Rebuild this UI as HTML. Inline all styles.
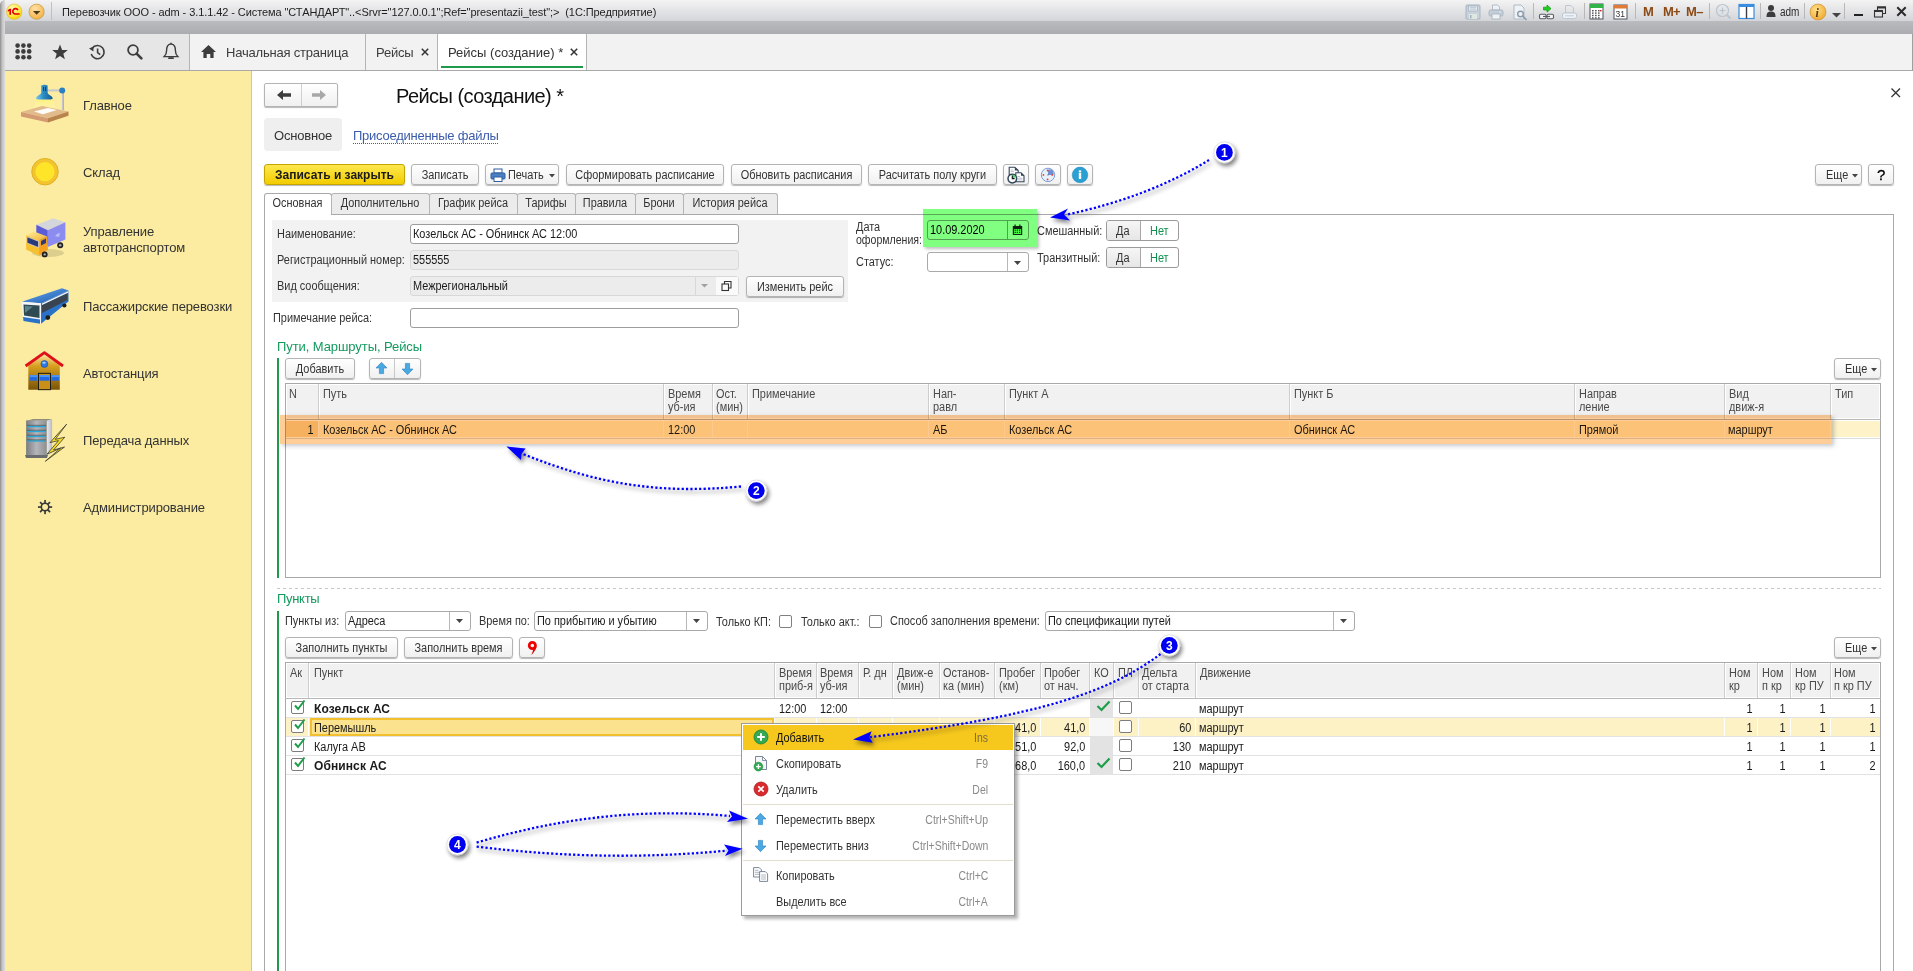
<!DOCTYPE html><html><head><meta charset="utf-8"><style>
*{margin:0;padding:0;box-sizing:border-box}
html,body{width:1913px;height:971px;overflow:hidden;background:#fff;font-family:"Liberation Sans",sans-serif}
.a{position:absolute}
.t{position:absolute;white-space:nowrap;line-height:16px;height:16px;font-family:"Liberation Sans",sans-serif}
.btn{position:absolute;border:1px solid #b4b4b4;border-radius:3px;background:linear-gradient(#ffffff,#f0f0f0);box-shadow:0 1px 1px rgba(0,0,0,.28)}
.inp{position:absolute;border:1px solid #a9a9a9;border-radius:3px;background:#fff}
</style></head><body><div class="a" style="left:0px;top:0px;width:1913px;height:21px;background:linear-gradient(#f3f3f3,#d3d5d9)"></div>
<div class="a" style="left:0px;top:21px;width:1913px;height:13px;background:linear-gradient(#b9bbbf,#aaacb0)"></div>
<div class="a" style="left:0px;top:0px;width:5px;height:971px;background:linear-gradient(90deg,#8e8e8e,#c4c4c4 45%,#dcdcdc);border-top-left-radius:6px"></div>
<svg class="a" style="left:5px;top:2px;" width="20" height="20" viewBox="0 0 20 20"><defs><radialGradient id="g1c" cx="40%" cy="30%" r="75%"><stop offset="0" stop-color="#fffac0"/><stop offset=".6" stop-color="#ffe640"/><stop offset="1" stop-color="#f5d000"/></radialGradient></defs><circle cx="9.2" cy="9.7" r="7.7" fill="url(#g1c)" stroke="#d8b020" stroke-width="0.5"/><path d="M2.8 8.1 L4.7 6.8 H6.1 V12.8 H4.4 V8.9 L2.8 9.7Z" fill="#e00000"/><path d="M12.9 8.2 A2.7 2.7 0 1 0 9.9 12 H14.6" fill="none" stroke="#e00000" stroke-width="1.7"/></svg>
<svg class="a" style="left:28px;top:3px;" width="18" height="18" viewBox="0 0 18 18"><defs><radialGradient id="gdd" cx="40%" cy="30%" r="75%"><stop offset="0" stop-color="#ffe0a8"/><stop offset="1" stop-color="#f5b040"/></radialGradient></defs><circle cx="8.6" cy="8.7" r="7.6" fill="url(#gdd)" stroke="#b89030" stroke-width="0.6"/><path d="M4.9 8 L12.4 8 L8.6 11.8Z" fill="#4a3a1a"/></svg>
<div class="a" style="left:51px;top:2px;width:1px;height:18px;background:#c0c0c0"></div>
<div class="t" style="left:62px;top:4px;font-size:11px;letter-spacing:-0.08px;color:#1e1e1e;font-weight:normal;">Перевозчик ООО - adm - 3.1.1.42 - Система "СТАНДАРТ"..&lt;Srvr="127.0.0.1";Ref="presentazii_test";&gt;&nbsp;&nbsp;(1С:Предприятие)</div>
<svg class="a" style="left:1465px;top:4px;" width="16" height="16" viewBox="0 0 16 16"><rect x="1" y="1" width="14" height="14" rx="1" fill="#c8d2dc" stroke="#a4b0bc" stroke-width="0.9"/><rect x="3.5" y="2" width="9" height="5" fill="#e4eaf0" stroke="#a4b0bc" stroke-width="0.7"/><path d="M5 3.6 H11 M5 5.2 H11" stroke="#a4b0bc" stroke-width="0.6"/><rect x="4" y="10" width="8" height="5" fill="#dfe8e0"/><rect x="5" y="11" width="1.5" height="3.5" fill="#a4b0bc"/></svg>
<svg class="a" style="left:1488px;top:4px;" width="16" height="16" viewBox="0 0 16 16"><path d="M4.5 1 H9.5 L11.5 3 V6 H4.5Z" fill="#eef2f5" stroke="#a4b0bc" stroke-width="0.8"/><rect x="1" y="6" width="14" height="6" rx="1.5" fill="#c3ced9" stroke="#a4b0bc" stroke-width="0.8"/><rect x="4" y="10" width="8" height="5" fill="#eef2f5" stroke="#a4b0bc" stroke-width="0.8"/><circle cx="12" cy="8" r="0.7" fill="#eef2f5"/></svg>
<svg class="a" style="left:1512px;top:4px;" width="17" height="17" viewBox="0 0 17 17"><path d="M2 1 H9 L12 4 V15 H2Z" fill="#eef2f5" stroke="#a9b6c3" stroke-width="0.9"/><circle cx="8.5" cy="10" r="2.8" fill="none" stroke="#8a9aaa" stroke-width="1.4"/><path d="M10.5 12 L14.5 16" stroke="#8a9aaa" stroke-width="1.7"/></svg>
<div class="a" style="left:1533px;top:3px;width:1px;height:16px;background:#b8b8b8"></div>
<svg class="a" style="left:1538px;top:3px;" width="17" height="17" viewBox="0 0 17 17"><path d="M5.5 4.2 H9 V2 L13 5.6 L9 9.2 V7 H5.5Z" fill="#20d020" stroke="#109010" stroke-width="0.7"/><rect x="1.5" y="11.2" width="6.5" height="4.6" rx="1.2" fill="#f4f4f4" stroke="#5a5e66" stroke-width="1.1"/><rect x="9" y="11.2" width="6.5" height="4.6" rx="1.2" fill="#f4f4f4" stroke="#5a5e66" stroke-width="1.1"/><path d="M5 13.5 H12" stroke="#5a5e66" stroke-width="1.1"/></svg>
<svg class="a" style="left:1561px;top:4px;" width="17" height="16" viewBox="0 0 17 16"><path d="M4.5 1.5 H10 L12.5 4 V9 H4.5Z" fill="none" stroke="#b9c4cf" stroke-width="0.9"/><rect x="1.5" y="9" width="14" height="5.5" rx="2" fill="#eef2f6" stroke="#b9c4cf" stroke-width="0.9"/><path d="M4 11.8 H13" stroke="#b9c4cf" stroke-width="0.8"/></svg>
<div class="a" style="left:1584px;top:3px;width:1px;height:16px;background:#b8b8b8"></div>
<svg class="a" style="left:1589px;top:3px;" width="15" height="17" viewBox="0 0 15 17"><rect x="1" y="1" width="13" height="15" fill="#fff" stroke="#4c5460"/><rect x="1" y="1" width="13" height="4" fill="#31b34a"/><rect x="3" y="7.0" width="1.6" height="1.4" fill="#555"/><rect x="3" y="9.4" width="1.6" height="1.4" fill="#555"/><rect x="3" y="11.8" width="1.6" height="1.4" fill="#555"/><rect x="3" y="14.2" width="1.6" height="1.4" fill="#555"/><rect x="6" y="7.0" width="1.6" height="1.4" fill="#555"/><rect x="6" y="9.4" width="1.6" height="1.4" fill="#555"/><rect x="6" y="11.8" width="1.6" height="1.4" fill="#555"/><rect x="6" y="14.2" width="1.6" height="1.4" fill="#555"/><rect x="9" y="7.0" width="1.6" height="1.4" fill="#555"/><rect x="9" y="9.4" width="1.6" height="1.4" fill="#555"/><rect x="9" y="11.8" width="1.6" height="1.4" fill="#555"/><rect x="9" y="14.2" width="1.6" height="1.4" fill="#555"/><rect x="11" y="7" width="1.6" height="1.4" fill="#d22"/></svg>
<svg class="a" style="left:1613px;top:3px;" width="15" height="17" viewBox="0 0 15 17"><rect x="1" y="2" width="13" height="14" fill="#fff" stroke="#4c5460"/><rect x="1" y="2" width="13" height="3.5" fill="#e07c3a"/><text x="2.5" y="14" font-family="Liberation Sans" font-size="8.5" fill="#333">31</text></svg>
<div class="a" style="left:1635px;top:3px;width:1px;height:16px;background:#b8b8b8"></div>
<div class="t" style="left:1643px;top:4px;font-size:13px;letter-spacing:0px;color:#8b4a16;font-weight:bold;">M</div>
<div class="t" style="left:1663px;top:4px;font-size:13px;letter-spacing:-0.8px;color:#8b4a16;font-weight:bold;">M+</div>
<div class="t" style="left:1686px;top:4px;font-size:13px;letter-spacing:-0.5px;color:#8b4a16;font-weight:bold;">M–</div>
<div class="a" style="left:1709px;top:3px;width:1px;height:16px;background:#b8b8b8"></div>
<svg class="a" style="left:1715px;top:3px;" width="17" height="17" viewBox="0 0 17 17"><circle cx="7.5" cy="7.5" r="6" fill="none" stroke="#b9c4cf" stroke-width="1.2"/><path d="M7.5 4.5V10.5M4.5 7.5H10.5" stroke="#b9c4cf" stroke-width="1.2"/><path d="M12 12 L15.5 15.5" stroke="#b9c4cf" stroke-width="2"/></svg>
<svg class="a" style="left:1738px;top:3px;" width="17" height="17" viewBox="0 0 17 17"><rect x="1" y="1.5" width="15" height="14" fill="#fff" stroke="#3a8ee0" stroke-width="1.2"/><rect x="1" y="1.5" width="15" height="2.5" fill="#3a8ee0"/><path d="M8.5 4V15.5" stroke="#3a3f48" stroke-width="1.4"/></svg>
<div class="a" style="left:1760px;top:3px;width:1px;height:16px;background:#b8b8b8"></div>
<svg class="a" style="left:1766px;top:4px;" width="10" height="14" viewBox="0 0 10 14"><circle cx="5" cy="4" r="3" fill="#3c3c3c"/><path d="M0.5 13 C0.5 8 2.5 7.5 5 7.5 C7.5 7.5 9.5 8 9.5 13Z" fill="#3c3c3c"/></svg>
<div class="t" style="left:1780px;top:4px;font-size:12px;letter-spacing:0px;color:#2a2a2a;font-weight:normal;transform:scaleX(0.83);transform-origin:0 0;">adm</div>
<div class="a" style="left:1804px;top:3px;width:1px;height:16px;background:#b8b8b8"></div>
<svg class="a" style="left:1809px;top:3px;" width="18" height="18" viewBox="0 0 18 18"><defs><radialGradient id="gin" cx="40%" cy="35%" r="70%"><stop offset="0" stop-color="#ffe08a"/><stop offset="1" stop-color="#f0a830"/></radialGradient></defs><circle cx="9" cy="9" r="8" fill="url(#gin)" stroke="#c98a2a" stroke-width="0.6"/><text x="6.6" y="14" font-family="Liberation Serif" font-style="italic" font-weight="bold" font-size="12" fill="#5a3a10">i</text></svg>
<svg class="a" style="left:1831px;top:11px;" width="12" height="8" viewBox="0 0 12 8"><path d="M1 2 H10 L5.5 6.5Z" fill="#444"/></svg>
<div class="a" style="left:1844px;top:3px;width:1px;height:16px;background:#b8b8b8"></div>
<div class="a" style="left:1854px;top:14px;width:9px;height:2px;background:#222"></div>
<svg class="a" style="left:1873px;top:6px;" width="14" height="12" viewBox="0 0 14 12"><path d="M4.5 4 V1 H12.5 V7.5 H10" fill="none" stroke="#333" stroke-width="1.1"/><rect x="4" y="0.5" width="9" height="2" fill="#333"/><rect x="1.5" y="4.5" width="8" height="6.5" fill="none" stroke="#333" stroke-width="1.1"/><rect x="1" y="4" width="9" height="2" fill="#333"/></svg>
<svg class="a" style="left:1896px;top:6px;" width="11" height="11" viewBox="0 0 11 11"><path d="M1.3 1.3 L9.7 9.7 M9.7 1.3 L1.3 9.7" stroke="#2a2a2a" stroke-width="2"/></svg>
<div class="a" style="left:5px;top:34px;width:185px;height:36px;background:#e6e6e6"></div>
<div class="a" style="left:189px;top:34px;width:1px;height:36px;background:#b4b4b4"></div>
<div class="a" style="left:190px;top:34px;width:1723px;height:36px;background:#f2f2f2"></div>
<div class="a" style="left:5px;top:70px;width:1908px;height:1px;background:#a9a9a9"></div>
<svg class="a" style="left:15px;top:43px;" width="18" height="18" viewBox="0 0 18 18"><circle cx="2.6" cy="2.6" r="2.3" fill="#3d3d3d"/><circle cx="2.6" cy="8.4" r="2.3" fill="#3d3d3d"/><circle cx="2.6" cy="14.2" r="2.3" fill="#3d3d3d"/><circle cx="8.4" cy="2.6" r="2.3" fill="#3d3d3d"/><circle cx="8.4" cy="8.4" r="2.3" fill="#3d3d3d"/><circle cx="8.4" cy="14.2" r="2.3" fill="#3d3d3d"/><circle cx="14.2" cy="2.6" r="2.3" fill="#3d3d3d"/><circle cx="14.2" cy="8.4" r="2.3" fill="#3d3d3d"/><circle cx="14.2" cy="14.2" r="2.3" fill="#3d3d3d"/></svg>
<svg class="a" style="left:51px;top:43px;" width="18" height="18" viewBox="0 0 18 18"><path d="M9 1.5 L11.1 6.9 L16.8 7.1 L12.3 10.7 L13.9 16.2 L9 13.1 L4.1 16.2 L5.7 10.7 L1.2 7.1 L6.9 6.9Z" fill="#3d3d3d"/></svg>
<svg class="a" style="left:88px;top:43px;" width="18" height="18" viewBox="0 0 18 18"><path d="M4.2 5.2 A6.6 6.6 0 1 1 3.2 11" fill="none" stroke="#3d3d3d" stroke-width="1.6"/><path d="M1 5.5 L5.6 3.6 L5.4 8.4Z" fill="#3d3d3d"/><path d="M9.6 5.5 V9.6 L12.2 11.6" fill="none" stroke="#3d3d3d" stroke-width="1.6"/></svg>
<svg class="a" style="left:126px;top:43px;" width="18" height="18" viewBox="0 0 18 18"><circle cx="7" cy="7" r="4.9" fill="none" stroke="#3d3d3d" stroke-width="1.8"/><path d="M10.6 10.6 L15.4 15.4" stroke="#3d3d3d" stroke-width="2.6" stroke-linecap="round"/></svg>
<svg class="a" style="left:162px;top:42px;" width="18" height="19" viewBox="0 0 18 19"><path d="M9 2 C5.4 2 4.6 5.5 4.6 8.5 C4.6 11.5 3.8 13 2.2 14.6 H15.8 C14.2 13 13.4 11.5 13.4 8.5 C13.4 5.5 12.6 2 9 2Z" fill="none" stroke="#3d3d3d" stroke-width="1.4"/><path d="M7 16.2 H11" stroke="#3d3d3d" stroke-width="1.8" stroke-linecap="round"/><path d="M9 0.8 V2.2" stroke="#3d3d3d" stroke-width="1.4"/></svg>
<svg class="a" style="left:200px;top:44px;" width="17" height="15" viewBox="0 0 17 15"><path d="M8.5 1 L16 8 H13.6 V14 H10.3 V10 H6.7 V14 H3.4 V8 H1Z" fill="#3d3d3d"/></svg>
<div class="t" style="left:226px;top:45px;font-size:13px;letter-spacing:-0.2px;color:#3c3c3c;font-weight:normal;">Начальная страница</div>
<div class="a" style="left:365px;top:34px;width:1px;height:36px;background:#b4b4b4"></div>
<div class="t" style="left:376px;top:45px;font-size:13px;letter-spacing:-0.2px;color:#3c3c3c;font-weight:normal;">Рейсы</div>
<svg class="a" style="left:420px;top:47px;" width="10" height="10" viewBox="0 0 10 10"><path d="M1.8 1.8 L8.2 8.2 M8.2 1.8 L1.8 8.2" stroke="#333" stroke-width="1.5"/></svg>
<div class="a" style="left:437px;top:34px;width:1px;height:36px;background:#b4b4b4"></div>
<div class="a" style="left:438px;top:34px;width:148px;height:36px;background:#ffffff"></div>
<div class="t" style="left:448px;top:45px;font-size:13px;letter-spacing:0px;color:#333;font-weight:normal;">Рейсы (создание) *</div>
<svg class="a" style="left:569px;top:47px;" width="10" height="10" viewBox="0 0 10 10"><path d="M1.8 1.8 L8.2 8.2 M8.2 1.8 L1.8 8.2" stroke="#333" stroke-width="1.5"/></svg>
<div class="a" style="left:441px;top:66px;width:142px;height:2px;background:#1f9a4a"></div>
<div class="a" style="left:586px;top:34px;width:1px;height:36px;background:#b4b4b4"></div>
<div class="a" style="left:1912px;top:34px;width:1px;height:37px;background:#a0a0a0"></div>
<div class="a" style="left:5px;top:71px;width:246px;height:900px;background:#fbeca1"></div>
<div class="a" style="left:251px;top:71px;width:1px;height:900px;background:#d6c78a"></div>
<svg class="a" style="left:15px;top:75px;" width="60" height="60" viewBox="0 0 60 60"><defs><linearGradient id="lp1" x1="0" y1="0" x2="1" y2="0"><stop offset="0" stop-color="#7cc8ee"/><stop offset=".45" stop-color="#2a8cc4"/><stop offset="1" stop-color="#125c94"/></linearGradient><linearGradient id="pole" x1="0" y1="0" x2="1" y2="0"><stop offset="0" stop-color="#f4f4f8"/><stop offset="1" stop-color="#9a9ca8"/></linearGradient><linearGradient id="lgt" x1="0" y1="0" x2="0" y2="1"><stop offset="0" stop-color="#fff27a" stop-opacity=".95"/><stop offset="1" stop-color="#fff6b0" stop-opacity=".5"/></linearGradient></defs><path d="M22 24.4 H37 L41 33 H18Z" fill="url(#lgt)"/><path d="M6 37 L27 31 L53.5 36.5 L33 43.3Z" fill="#e2bb8c"/><path d="M6 37 L33 43.3 V47.6 L6 41.5Z" fill="#d49a72"/><path d="M33 43.3 L53.5 36.5 V40.8 L33 47.6Z" fill="#b9834e"/><path d="M19 36.6 L33 33 L42 35 L28 39.2Z" fill="#fff" opacity=".95"/><rect x="46" y="16" width="2.8" height="19" fill="url(#pole)"/><rect x="32" y="14.4" width="14" height="2" fill="#c4c6d0"/><circle cx="47.2" cy="15.6" r="3" fill="#2a7fc0"/><path d="M26.2 10.4 Q29.4 9.2 32.6 10.4 V17.8 C33 20 37.7 21 37.7 23.4 Q37.7 24.6 29.4 24.6 Q21 24.6 21 23.4 C21 21 25.8 20 26.2 17.8Z" fill="url(#lp1)"/><rect x="28" y="12" width="0.9" height="4" fill="#0c3a60"/><rect x="30" y="12" width="0.9" height="4" fill="#0c3a60"/></svg>
<div class="t" style="left:83px;top:98px;font-size:13px;letter-spacing:-0.12px;color:#333;font-weight:normal;">Главное</div>
<svg class="a" style="left:30px;top:157px;" width="30" height="30" viewBox="0 0 30 30"><circle cx="15" cy="14.7" r="13.3" fill="#f4c430" stroke="#d8a818" stroke-width="0.8"/><circle cx="15" cy="14.7" r="9.6" fill="#ffe52a"/></svg>
<div class="t" style="left:83px;top:165px;font-size:13px;letter-spacing:-0.12px;color:#333;font-weight:normal;">Склад</div>
<svg class="a" style="left:15px;top:205px;" width="60" height="60" viewBox="0 0 60 60"><defs><linearGradient id="cab" x1="0" y1="0" x2="1" y2="1"><stop offset="0" stop-color="#fff0a0"/><stop offset="1" stop-color="#f2b030"/></linearGradient></defs><ellipse cx="33" cy="48" rx="16" ry="4" fill="#000" opacity=".12"/><path d="M21.3 19.8 L38.3 13.3 L50.4 17.3 L32.8 25.3Z" fill="#d4d6dc"/><path d="M21.3 19.8 L32.8 25.3 V40.5 L21.3 33Z" fill="#5c5cd6"/><path d="M32.8 25.3 L50.4 17.3 V34.6 L32.8 42Z" fill="#8c8cf0"/><path d="M40 31 Q42 28 45 28 L44 32Z" fill="#c8c8fa" opacity=".8"/><circle cx="45.2" cy="40.2" r="3" fill="#1e1e1e"/><circle cx="45.2" cy="40.2" r="1.3" fill="#aaa"/><path d="M11.1 30.3 L18.5 26.3 L32.1 31.5 L24.1 35.5Z" fill="url(#cab)"/><path d="M24.1 35.5 L32.1 31.5 L33 44.5 L24.1 50.7Z" fill="#f4a020"/><path d="M11.1 30.3 L24.1 35.5 V50.7 L11.1 44.5Z" fill="#f6c030"/><path d="M12 31.8 L23.5 36.3 V42.5 L12 38Z" fill="#2a3a7a" stroke="#e8e8f0" stroke-width="0.6"/><path d="M26 36 L31 33.5 V38 L26 40.5Z" fill="#2a3a7a"/><circle cx="29.7" cy="49.4" r="2.9" fill="#1e1e1e"/><circle cx="29.7" cy="49.4" r="1.2" fill="#aaa"/></svg>
<div class="t" style="left:83px;top:224px;font-size:13px;letter-spacing:-0.12px;color:#333;font-weight:normal;">Управление</div>
<div class="t" style="left:83px;top:240px;font-size:13px;letter-spacing:-0.12px;color:#333;font-weight:normal;">автотранспортом</div>
<svg class="a" style="left:15px;top:278px;" width="60" height="60" viewBox="0 0 60 60"><defs><linearGradient id="bus" x1="0" y1="0" x2="1" y2="1"><stop offset="0" stop-color="#6aaaf0"/><stop offset="1" stop-color="#1a5ab0"/></linearGradient></defs><path d="M6.8 23.8 L47 10.2 L53.5 12.4 L26 25.3Z" fill="url(#bus)"/><path d="M26 25.3 L53.5 12.4 V23.5 L26 45.7Z" fill="#2a72c8"/><path d="M27 27 L52.5 15 V22 L27 35Z" fill="#3a4450"/><path d="M27 25.5 L53.5 13 V14.5 L27 27Z" fill="#f0f4fa"/><path d="M6.8 23.8 L26 25.3 V45.7 L8 42Z" fill="#f4f6fa"/><path d="M8.5 26.5 L24.5 27.5 V40 L9 37.5Z" fill="#2e4a52"/><path d="M10 28 L18 28.5 L10 35Z" fill="#7aa8b0" opacity=".6"/><path d="M8 39 L25 41.5 V45.7 L8.5 43Z" fill="#2a72c8"/><circle cx="32.8" cy="39.6" r="2.4" fill="#1e1e1e"/><circle cx="49.4" cy="27.5" r="2.1" fill="#1e1e1e"/></svg>
<div class="t" style="left:83px;top:299px;font-size:13px;letter-spacing:-0.12px;color:#333;font-weight:normal;">Пассажирские перевозки</div>
<svg class="a" style="left:15px;top:343px;" width="60" height="60" viewBox="0 0 60 60"><defs><linearGradient id="hs" x1="0" y1="0" x2="0" y2="1"><stop offset="0" stop-color="#fff0b0"/><stop offset=".35" stop-color="#d8a020"/><stop offset="1" stop-color="#7a5408"/></linearGradient></defs><path d="M13.3 22 L29.4 10 L44.8 22 V46.7 H13.3Z" fill="url(#hs)"/><path d="M10.6 23 L29.4 9.6 L48 23" fill="none" stroke="#e0101a" stroke-width="2.8" stroke-linejoin="round"/><circle cx="29.4" cy="21" r="3.5" fill="#2f78e0" stroke="#1a4090" stroke-width="0.5"/><ellipse cx="29" cy="19.8" rx="1.8" ry="1" fill="#a8d0ff"/><rect x="14.8" y="32.1" width="7.1" height="5.6" fill="#1f6ae0"/><rect x="37" y="32.1" width="6.9" height="5.6" fill="#1f6ae0"/><rect x="23.5" y="30.3" width="12" height="16.4" fill="#c89018" stroke="#111" stroke-width="0.9"/><rect x="24.5" y="32" width="10" height="5.7" fill="#1f6ae0"/><rect x="14.8" y="32.1" width="7.1" height="2" fill="#60a8ff" opacity=".7"/><rect x="24.5" y="32" width="10" height="2" fill="#60a8ff" opacity=".7"/><rect x="37" y="32.1" width="6.9" height="2" fill="#60a8ff" opacity=".7"/></svg>
<div class="t" style="left:83px;top:366px;font-size:13px;letter-spacing:-0.12px;color:#333;font-weight:normal;">Автостанция</div>
<svg class="a" style="left:15px;top:410px;" width="60" height="60" viewBox="0 0 60 60"><defs><linearGradient id="sv" x1="0" y1="0" x2="1" y2="0"><stop offset="0" stop-color="#7a7c80"/><stop offset=".5" stop-color="#b4b6ba"/><stop offset="1" stop-color="#8c8e92"/></linearGradient><linearGradient id="sv2" x1="0" y1="0" x2="1" y2="0"><stop offset="0" stop-color="#e8eaee"/><stop offset="1" stop-color="#b8bac0"/></linearGradient></defs><path d="M31.8 10.5 L37.1 9.3 V42 L31.8 46Z" fill="url(#sv2)"/><path d="M11.1 10.8 L18 9.3 H37.1 L31.8 10.5Z" fill="#6a6c70"/><rect x="11.1" y="10.5" width="20.7" height="35.5" fill="url(#sv)"/><rect x="12" y="15.8" width="19" height="1.4" fill="#28a8d8"/><rect x="12" y="20.7" width="19" height="1.4" fill="#28a8d8"/><rect x="12" y="25.7" width="19" height="1.4" fill="#28a8d8"/><rect x="12" y="30.3" width="19" height="1.4" fill="#28a8d8"/><rect x="12" y="14.8" width="19" height="1" fill="#333" opacity=".5"/><rect x="12" y="19.7" width="19" height="1" fill="#333" opacity=".5"/><rect x="12" y="24.7" width="19" height="1" fill="#333" opacity=".5"/><rect x="12" y="29.3" width="19" height="1" fill="#333" opacity=".5"/><path d="M10 45 H33 L32 48 H11Z" fill="#6a6c70"/><path d="M51.6 14.2 L35 32.6 L43.5 30.6 L32 44.2 L45.5 38.2 L30.3 51.3 L49.5 37 L38.5 40 L49.8 27.2 L40.2 29.4Z" fill="#f8dc20" stroke="#3a3a3a" stroke-width="0.8" stroke-linejoin="round"/></svg>
<div class="t" style="left:83px;top:433px;font-size:13px;letter-spacing:-0.12px;color:#333;font-weight:normal;">Передача данных</div>
<svg class="a" style="left:37px;top:499px;" width="16" height="16" viewBox="0 0 16 16"><g transform="translate(8.05 8.05)"><rect x="-0.85" y="-7.1" width="1.7" height="3.4" fill="#3a3a3a" transform="rotate(0)"/><rect x="-0.85" y="-7.1" width="1.7" height="3.4" fill="#3a3a3a" transform="rotate(45)"/><rect x="-0.85" y="-7.1" width="1.7" height="3.4" fill="#3a3a3a" transform="rotate(90)"/><rect x="-0.85" y="-7.1" width="1.7" height="3.4" fill="#3a3a3a" transform="rotate(135)"/><rect x="-0.85" y="-7.1" width="1.7" height="3.4" fill="#3a3a3a" transform="rotate(180)"/><rect x="-0.85" y="-7.1" width="1.7" height="3.4" fill="#3a3a3a" transform="rotate(225)"/><rect x="-0.85" y="-7.1" width="1.7" height="3.4" fill="#3a3a3a" transform="rotate(270)"/><rect x="-0.85" y="-7.1" width="1.7" height="3.4" fill="#3a3a3a" transform="rotate(315)"/><circle r="3.75" fill="none" stroke="#3a3a3a" stroke-width="1.6"/></g></svg>
<div class="t" style="left:83px;top:500px;font-size:13px;letter-spacing:-0.12px;color:#333;font-weight:normal;">Администрирование</div>
<div class="btn" style="left:264px;top:83px;width:74px;height:24px;border-radius:2px"></div>
<div class="a" style="left:301px;top:84px;width:1px;height:22px;background:#d0d0d0"></div>
<svg class="a" style="left:276px;top:89px;" width="16" height="12" viewBox="0 0 16 12"><path d="M1 6 L7 1 V4.3 H15 V7.7 H7 V11Z" fill="#3d3d3d"/></svg>
<svg class="a" style="left:311px;top:89px;" width="16" height="12" viewBox="0 0 16 12"><path d="M15 6 L9 1 V4.3 H1 V7.7 H9 V11Z" fill="#a8a8a8"/></svg>
<div class="t" style="left:396px;top:88px;font-size:20px;letter-spacing:-0.55px;color:#111;font-weight:normal;line-height:16px">Рейсы (создание) *</div>
<svg class="a" style="left:1890px;top:87px;" width="12" height="12" viewBox="0 0 12 12"><path d="M1.5 1.5 L10 10 M10 1.5 L1.5 10" stroke="#333" stroke-width="1.3"/></svg>
<div class="a" style="left:264px;top:118px;width:78px;height:33px;background:#efefef;border-radius:4px"></div>
<div class="t" style="left:274px;top:128px;font-size:13px;letter-spacing:-0.2px;color:#333;font-weight:normal;">Основное</div>
<div class="t" style="left:353px;top:128px;font-size:13px;letter-spacing:-0.25px;color:#3b5ba9;font-weight:normal;">Присоединенные файлы</div>
<div class="a" style="left:353px;top:143px;width:146px;height:1px;background-image:linear-gradient(90deg,#3b5ba9 50%,transparent 50%);background-size:2px 1px"></div>
<div class="btn" style="left:264px;top:164px;width:141px;height:21px;border-color:#c4a500;background:linear-gradient(#fde84e,#f3cc00)"></div>
<div class="t" style="left:275px;top:166.5px;font-size:12px;letter-spacing:0px;color:#1a1a1a;font-weight:bold;">Записать и закрыть</div>
<div class="btn" style="left:411px;top:164px;width:68px;height:21px;"></div>
<div class="t" style="left:411px;width:68px;text-align:center;top:166.5px;font-size:12px;color:#333;transform:scaleX(0.91);transform-origin:50% 0">Записать</div>
<div class="btn" style="left:485px;top:164px;width:74px;height:21px;"></div>
<svg class="a" style="left:490px;top:168px;" width="16" height="14" viewBox="0 0 16 14"><rect x="4" y="1" width="8" height="4" fill="#fff" stroke="#2f5f9e" stroke-width="1"/><rect x="1" y="5" width="14" height="6" rx="1" fill="#4a7fc4" stroke="#2f5f9e"/><rect x="4" y="9" width="8" height="4.5" fill="#fff" stroke="#2f5f9e"/></svg>
<div class="t" style="left:508px;top:166.5px;font-size:12px;letter-spacing:0px;color:#333;font-weight:normal;transform:scaleX(0.91);transform-origin:0 0;">Печать</div>
<svg class="a" style="left:549px;top:174px;" width="6" height="4" viewBox="0 0 6 4"><path d="M0 0 H6 L3 3.5Z" fill="#444"/></svg>
<div class="btn" style="left:566px;top:164px;width:158px;height:21px;"></div>
<div class="t" style="left:566px;width:158px;text-align:center;top:166.5px;font-size:12px;color:#333;transform:scaleX(0.91);transform-origin:50% 0">Сформировать расписание</div>
<div class="btn" style="left:731px;top:164px;width:131px;height:21px;"></div>
<div class="t" style="left:731px;width:131px;text-align:center;top:166.5px;font-size:12px;color:#333;transform:scaleX(0.91);transform-origin:50% 0">Обновить расписания</div>
<div class="btn" style="left:868px;top:164px;width:129px;height:21px;"></div>
<div class="t" style="left:868px;width:129px;text-align:center;top:166.5px;font-size:12px;color:#333;transform:scaleX(0.91);transform-origin:50% 0">Расчитать полу круги</div>
<div class="btn" style="left:1003px;top:164px;width:26px;height:21px;"></div>
<svg class="a" style="left:1005px;top:164px;" width="22" height="20" viewBox="0 0 22 20"><path d="M4.2 3.2 H9.8 L13.2 6.6 V11 H4.2Z" fill="#fff" stroke="#33445a" stroke-width="1.1"/><path d="M9.8 3.2 V6.6 H13.2Z" fill="#33445a"/><path d="M5.6 6 H8 M5.6 7.6 H9" stroke="#9aa6b4" stroke-width="0.7"/><path d="M10.8 8.8 H16 L19 11.8 V17.8 H10.8Z" fill="#fff" stroke="#33445a" stroke-width="1.1"/><path d="M16 8.8 V11.8 H19Z" fill="#33445a"/><path d="M12.3 12.5 H15 M12.3 14.2 H17.5 M12.3 15.9 H17.5" stroke="#9aa6b4" stroke-width="0.7"/><circle cx="7.3" cy="14.6" r="4.3" fill="#fff" stroke="#33445a" stroke-width="1.5"/><path d="M7.3 14.6 V10.6 A4 4 0 0 1 11 13Z" fill="#4fd06a"/><path d="M7.3 11.5 V14.6 H9.6" fill="none" stroke="#111" stroke-width="1.1"/></svg>
<div class="btn" style="left:1035px;top:164px;width:26px;height:21px;"></div>
<svg class="a" style="left:1039px;top:166px;" width="18" height="18" viewBox="0 0 18 18"><circle cx="9" cy="8.9" r="6.7" fill="#e8f0fb" stroke="#6f93d2" stroke-width="0.9"/><path d="M9 8.9 V4.4 Q9 3.6 9.8 3.6 H12.4 Q14.2 4.4 14.6 7 V8.1 Q14.6 8.9 13.8 8.9Z" fill="#6f8fd0"/><circle cx="8.6" cy="4.5" r="0.9" fill="#f03a2a"/><circle cx="4.4" cy="8.9" r="0.9" fill="#f03a2a"/><circle cx="13.3" cy="8.9" r="0.9" fill="#f03a2a"/><circle cx="8.6" cy="13.4" r="0.9" fill="#f03a2a"/><circle cx="9" cy="8.9" r="0.7" fill="#4a6ab0"/></svg>
<div class="btn" style="left:1067px;top:164px;width:26px;height:21px;"></div>
<svg class="a" style="left:1071px;top:166px;" width="18" height="18" viewBox="0 0 18 18"><circle cx="9" cy="8.9" r="7.8" fill="#2aa0d2" stroke="#1f86b6" stroke-width="0.5"/><rect x="7.8" y="4.4" width="2.4" height="1.6" fill="#fff"/><rect x="7.8" y="6.6" width="2.4" height="6.4" fill="#fff"/></svg>
<div class="btn" style="left:1815px;top:164px;width:47px;height:21px;"></div>
<div class="t" style="left:1826px;top:166.5px;font-size:12px;letter-spacing:0px;color:#333;font-weight:normal;transform:scaleX(0.91);transform-origin:0 0;">Еще</div>
<svg class="a" style="left:1852px;top:174px;" width="6" height="4" viewBox="0 0 6 4"><path d="M0 0 H6 L3 3.5Z" fill="#444"/></svg>
<div class="btn" style="left:1868px;top:164px;width:26px;height:21px;"></div>
<div class="t" style="left:1877px;top:167px;font-size:15px;letter-spacing:0px;color:#000;font-weight:bold;font-weight:normal;-webkit-text-stroke:0.3px #000">?</div>
<div class="a" style="left:264px;top:214px;width:1630px;height:1px;background:#a9a9a9"></div>
<div class="a" style="left:264px;top:214px;width:1px;height:757px;background:#a9a9a9"></div>
<div class="a" style="left:1893px;top:214px;width:1px;height:757px;background:#a9a9a9"></div>
<div class="a" style="left:264px;top:193px;width:68px;height:22px;background:#fff;border:1px solid #a9a9a9;border-bottom:none;border-radius:3px 3px 0 0"></div>
<div class="t" style="left:264px;width:67px;text-align:center;top:195px;font-size:12px;color:#333;transform:scaleX(0.91);transform-origin:50% 0">Основная</div>
<div class="a" style="left:331px;top:193px;width:99px;height:21px;background:#ececec;border:1px solid #b5b5b5;border-bottom:none;border-radius:3px 3px 0 0"></div>
<div class="t" style="left:331px;width:98px;text-align:center;top:195px;font-size:12px;color:#333;transform:scaleX(0.91);transform-origin:50% 0">Дополнительно</div>
<div class="a" style="left:429px;top:193px;width:89px;height:21px;background:#ececec;border:1px solid #b5b5b5;border-bottom:none;border-radius:3px 3px 0 0"></div>
<div class="t" style="left:429px;width:88px;text-align:center;top:195px;font-size:12px;color:#333;transform:scaleX(0.91);transform-origin:50% 0">График рейса</div>
<div class="a" style="left:517px;top:193px;width:59px;height:21px;background:#ececec;border:1px solid #b5b5b5;border-bottom:none;border-radius:3px 3px 0 0"></div>
<div class="t" style="left:517px;width:58px;text-align:center;top:195px;font-size:12px;color:#333;transform:scaleX(0.91);transform-origin:50% 0">Тарифы</div>
<div class="a" style="left:575px;top:193px;width:61px;height:21px;background:#ececec;border:1px solid #b5b5b5;border-bottom:none;border-radius:3px 3px 0 0"></div>
<div class="t" style="left:575px;width:60px;text-align:center;top:195px;font-size:12px;color:#333;transform:scaleX(0.91);transform-origin:50% 0">Правила</div>
<div class="a" style="left:635px;top:193px;width:49px;height:21px;background:#ececec;border:1px solid #b5b5b5;border-bottom:none;border-radius:3px 3px 0 0"></div>
<div class="t" style="left:635px;width:48px;text-align:center;top:195px;font-size:12px;color:#333;transform:scaleX(0.91);transform-origin:50% 0">Брони</div>
<div class="a" style="left:683px;top:193px;width:95px;height:21px;background:#ececec;border:1px solid #b5b5b5;border-bottom:none;border-radius:3px 3px 0 0"></div>
<div class="t" style="left:683px;width:94px;text-align:center;top:195px;font-size:12px;color:#333;transform:scaleX(0.91);transform-origin:50% 0">История рейса</div>
<div class="a" style="left:272px;top:220px;width:576px;height:82px;background:#f2f2f2"></div>
<div class="t" style="left:277px;top:226px;font-size:12px;letter-spacing:0px;color:#333;font-weight:normal;transform:scaleX(0.91);transform-origin:0 0;">Наименование:</div>
<div class="inp" style="left:410px;top:224px;width:329px;height:20px;border-color:#9d9d9d"></div>
<div class="t" style="left:413px;top:226px;font-size:12px;letter-spacing:0px;color:#1a1a1a;font-weight:normal;transform:scaleX(0.91);transform-origin:0 0;">Козельск АС - Обнинск АС 12:00</div>
<div class="t" style="left:277px;top:252px;font-size:12px;letter-spacing:0px;color:#333;font-weight:normal;transform:scaleX(0.91);transform-origin:0 0;">Регистрационный номер:</div>
<div class="inp" style="left:410px;top:250px;width:329px;height:20px;background:#ececec;border-color:#d8d8d8"></div>
<div class="t" style="left:413px;top:252px;font-size:12px;letter-spacing:0px;color:#1a1a1a;font-weight:normal;transform:scaleX(0.91);transform-origin:0 0;">555555</div>
<div class="t" style="left:277px;top:278px;font-size:12px;letter-spacing:0px;color:#333;font-weight:normal;transform:scaleX(0.91);transform-origin:0 0;">Вид сообщения:</div>
<div class="inp" style="left:410px;top:276px;width:329px;height:20px;background:#ececec;border-color:#d8d8d8"></div>
<div class="a" style="left:695px;top:277px;width:1px;height:18px;background:#d8d8d8"></div>
<div class="a" style="left:716px;top:277px;width:1px;height:18px;background:#d8d8d8"></div>
<div class="a" style="left:716px;top:277px;width:22px;height:18px;background:#fafafa"></div>
<svg class="a" style="left:701px;top:284px;" width="8" height="4" viewBox="0 0 8 4"><path d="M0 0 H7 L3.5 3.5Z" fill="#a0a0a0"/></svg>
<svg class="a" style="left:721px;top:280px;" width="12" height="12" viewBox="0 0 12 12"><rect x="1" y="4" width="6.5" height="6.5" fill="none" stroke="#333" stroke-width="1.1"/><path d="M3.5 4 V1.5 H10 V8 H7.5" fill="none" stroke="#333" stroke-width="1.1"/></svg>
<div class="t" style="left:413px;top:278px;font-size:12px;letter-spacing:0px;color:#1a1a1a;font-weight:normal;transform:scaleX(0.91);transform-origin:0 0;">Межрегиональный</div>
<div class="btn" style="left:746px;top:276px;width:98px;height:21px;"></div>
<div class="t" style="left:746px;width:98px;text-align:center;top:278.5px;font-size:12px;color:#333;transform:scaleX(0.91);transform-origin:50% 0">Изменить рейс</div>
<div class="t" style="left:273px;top:310px;font-size:12px;letter-spacing:0px;color:#333;font-weight:normal;transform:scaleX(0.91);transform-origin:0 0;">Примечание рейса:</div>
<div class="inp" style="left:410px;top:308px;width:329px;height:20px;border-color:#9d9d9d"></div>
<div class="t" style="left:856px;top:219px;font-size:12px;letter-spacing:0px;color:#333;font-weight:normal;transform:scaleX(0.91);transform-origin:0 0;">Дата</div>
<div class="t" style="left:856px;top:232px;font-size:12px;letter-spacing:0px;color:#333;font-weight:normal;transform:scaleX(0.88);transform-origin:0 0;">оформления:</div>
<div class="inp" style="left:927px;top:220px;width:102px;height:20px;border-color:#a0a0a0"></div>
<div class="a" style="left:1007px;top:221px;width:1px;height:18px;background:#a0a0a0"></div>
<div class="t" style="left:930px;top:222px;font-size:12px;letter-spacing:0px;color:#000;font-weight:normal;transform:scaleX(0.91);transform-origin:0 0;">10.09.2020</div>
<svg class="a" style="left:1012px;top:224px;" width="11" height="12" viewBox="0 0 11 12"><rect x="0.8" y="2" width="9.4" height="9" fill="#222"/><rect x="2" y="5" width="7" height="5" fill="#80ff80"/><rect x="2.5" y="0.5" width="1.2" height="2.5" fill="#222"/><rect x="7.3" y="0.5" width="1.2" height="2.5" fill="#222"/><rect x="2.6" y="5.6" width="1.2" height="1.2" fill="#222"/><rect x="2.6" y="7.8" width="1.2" height="1.2" fill="#222"/><rect x="4.800000000000001" y="5.6" width="1.2" height="1.2" fill="#222"/><rect x="4.800000000000001" y="7.8" width="1.2" height="1.2" fill="#222"/><rect x="7.0" y="5.6" width="1.2" height="1.2" fill="#222"/><rect x="7.0" y="7.8" width="1.2" height="1.2" fill="#222"/></svg>
<div class="t" style="left:856px;top:254px;font-size:12px;letter-spacing:0px;color:#333;font-weight:normal;transform:scaleX(0.91);transform-origin:0 0;">Статус:</div>
<div class="inp" style="left:927px;top:252px;width:102px;height:20px;border-color:#a9a9a9"></div>
<div class="a" style="left:1007px;top:253px;width:1px;height:18px;background:#b8b8b8"></div>
<svg class="a" style="left:1014px;top:261px;" width="8" height="5" viewBox="0 0 8 5"><path d="M0 0 H7 L3.5 4Z" fill="#444"/></svg>
<div class="t" style="left:1037px;top:223px;font-size:12px;letter-spacing:0px;color:#333;font-weight:normal;transform:scaleX(0.91);transform-origin:0 0;">Смешанный:</div>
<div class="t" style="left:1037px;top:250px;font-size:12px;letter-spacing:0px;color:#333;font-weight:normal;transform:scaleX(0.91);transform-origin:0 0;">Транзитный:</div>
<div class="a" style="left:1106px;top:220px;width:73px;height:21px;border:1px solid #9a9a9a;border-radius:3px;background:#fff"></div>
<div class="a" style="left:1107px;top:221px;width:33px;height:19px;background:linear-gradient(#f6f6f6,#e6e6e6);border-radius:2px 0 0 2px"></div>
<div class="a" style="left:1140px;top:221px;width:1px;height:19px;background:#a8a8a8"></div>
<div class="t" style="left:1116px;top:222.5px;font-size:12px;letter-spacing:0px;color:#333;font-weight:normal;transform:scaleX(0.91);transform-origin:0 0;">Да</div>
<div class="t" style="left:1150px;top:222.5px;font-size:12px;letter-spacing:0px;color:#129050;font-weight:normal;transform:scaleX(0.91);transform-origin:0 0;">Нет</div>
<div class="a" style="left:1106px;top:247px;width:73px;height:21px;border:1px solid #9a9a9a;border-radius:3px;background:#fff"></div>
<div class="a" style="left:1107px;top:248px;width:33px;height:19px;background:linear-gradient(#f6f6f6,#e6e6e6);border-radius:2px 0 0 2px"></div>
<div class="a" style="left:1140px;top:248px;width:1px;height:19px;background:#a8a8a8"></div>
<div class="t" style="left:1116px;top:249.5px;font-size:12px;letter-spacing:0px;color:#333;font-weight:normal;transform:scaleX(0.91);transform-origin:0 0;">Да</div>
<div class="t" style="left:1150px;top:249.5px;font-size:12px;letter-spacing:0px;color:#129050;font-weight:normal;transform:scaleX(0.91);transform-origin:0 0;">Нет</div>
<div class="t" style="left:277px;top:338.5px;font-size:13px;letter-spacing:-0.08px;color:#139a5e;font-weight:normal;">Пути, Маршруты, Рейсы</div>
<div class="a" style="left:277px;top:358px;width:2px;height:220px;background:#1f9a4a"></div>
<div class="btn" style="left:285px;top:358px;width:70px;height:21px;"></div>
<div class="t" style="left:285px;width:70px;text-align:center;top:360.5px;font-size:12px;color:#333;transform:scaleX(0.91);transform-origin:50% 0">Добавить</div>
<div class="btn" style="left:369px;top:358px;width:52px;height:21px"></div>
<div class="a" style="left:394px;top:359px;width:1px;height:19px;background:#c8c8c8"></div>
<svg class="a" style="left:374px;top:361px;" width="15" height="15" viewBox="0 0 15 15"><path d="M7.5 1.3 L13 7 H9.6 V12.6 H5.4 V7 H2Z" fill="#4aa8e2" stroke="#2f7fc0" stroke-width="0.6"/></svg>
<svg class="a" style="left:400px;top:361px;" width="15" height="15" viewBox="0 0 15 15"><path d="M7.5 13.7 L13 8 H9.6 V2.4 H5.4 V8 H2Z" fill="#4aa8e2" stroke="#2f7fc0" stroke-width="0.6"/></svg>
<div class="btn" style="left:1834px;top:358px;width:47px;height:21px;"></div>
<div class="t" style="left:1845px;top:360.5px;font-size:12px;letter-spacing:0px;color:#333;font-weight:normal;transform:scaleX(0.91);transform-origin:0 0;">Еще</div>
<svg class="a" style="left:1871px;top:368px;" width="6" height="4" viewBox="0 0 6 4"><path d="M0 0 H6 L3 3.5Z" fill="#444"/></svg>
<div class="a" style="left:285px;top:383px;width:1596px;height:195px;background:#fff;border:1px solid #a9a9a9"></div>
<div class="a" style="left:285px;top:383px;width:1596px;height:36px;background:#fff;border:1px solid #a9a9a9;border-bottom:none"></div>
<div class="a" style="left:287px;top:385px;width:1592px;height:33px;background:#f1f1f1"></div>
<div class="a" style="left:285px;top:419px;width:1596px;height:1px;background:#b8b8b8"></div>
<div class="a" style="left:318px;top:384px;width:1px;height:35px;background:#cdcdcd"></div>
<div class="a" style="left:319px;top:384px;width:1px;height:35px;background:#ffffff"></div>
<div class="a" style="left:663px;top:384px;width:1px;height:35px;background:#cdcdcd"></div>
<div class="a" style="left:664px;top:384px;width:1px;height:35px;background:#ffffff"></div>
<div class="a" style="left:712px;top:384px;width:1px;height:35px;background:#cdcdcd"></div>
<div class="a" style="left:713px;top:384px;width:1px;height:35px;background:#ffffff"></div>
<div class="a" style="left:747px;top:384px;width:1px;height:35px;background:#cdcdcd"></div>
<div class="a" style="left:748px;top:384px;width:1px;height:35px;background:#ffffff"></div>
<div class="a" style="left:928px;top:384px;width:1px;height:35px;background:#cdcdcd"></div>
<div class="a" style="left:929px;top:384px;width:1px;height:35px;background:#ffffff"></div>
<div class="a" style="left:1004px;top:384px;width:1px;height:35px;background:#cdcdcd"></div>
<div class="a" style="left:1005px;top:384px;width:1px;height:35px;background:#ffffff"></div>
<div class="a" style="left:1289px;top:384px;width:1px;height:35px;background:#cdcdcd"></div>
<div class="a" style="left:1290px;top:384px;width:1px;height:35px;background:#ffffff"></div>
<div class="a" style="left:1574px;top:384px;width:1px;height:35px;background:#cdcdcd"></div>
<div class="a" style="left:1575px;top:384px;width:1px;height:35px;background:#ffffff"></div>
<div class="a" style="left:1724px;top:384px;width:1px;height:35px;background:#cdcdcd"></div>
<div class="a" style="left:1725px;top:384px;width:1px;height:35px;background:#ffffff"></div>
<div class="a" style="left:1830px;top:384px;width:1px;height:35px;background:#cdcdcd"></div>
<div class="a" style="left:1831px;top:384px;width:1px;height:35px;background:#ffffff"></div>
<div class="t" style="left:289px;top:386px;font-size:12px;letter-spacing:0px;color:#4a4a4a;font-weight:normal;transform:scaleX(0.91);transform-origin:0 0;">N</div>
<div class="t" style="left:323px;top:386px;font-size:12px;letter-spacing:0px;color:#4a4a4a;font-weight:normal;transform:scaleX(0.91);transform-origin:0 0;">Путь</div>
<div class="t" style="left:668px;top:386px;font-size:12px;letter-spacing:0px;color:#4a4a4a;font-weight:normal;transform:scaleX(0.91);transform-origin:0 0;">Время</div>
<div class="t" style="left:668px;top:399px;font-size:12px;letter-spacing:0px;color:#4a4a4a;font-weight:normal;transform:scaleX(0.91);transform-origin:0 0;">уб-ия</div>
<div class="t" style="left:716px;top:386px;font-size:12px;letter-spacing:0px;color:#4a4a4a;font-weight:normal;transform:scaleX(0.91);transform-origin:0 0;">Ост.</div>
<div class="t" style="left:716px;top:399px;font-size:12px;letter-spacing:0px;color:#4a4a4a;font-weight:normal;transform:scaleX(0.91);transform-origin:0 0;">(мин)</div>
<div class="t" style="left:752px;top:386px;font-size:12px;letter-spacing:0px;color:#4a4a4a;font-weight:normal;transform:scaleX(0.91);transform-origin:0 0;">Примечание</div>
<div class="t" style="left:933px;top:386px;font-size:12px;letter-spacing:0px;color:#4a4a4a;font-weight:normal;transform:scaleX(0.91);transform-origin:0 0;">Нап-</div>
<div class="t" style="left:933px;top:399px;font-size:12px;letter-spacing:0px;color:#4a4a4a;font-weight:normal;transform:scaleX(0.91);transform-origin:0 0;">равл</div>
<div class="t" style="left:1009px;top:386px;font-size:12px;letter-spacing:0px;color:#4a4a4a;font-weight:normal;transform:scaleX(0.91);transform-origin:0 0;">Пункт А</div>
<div class="t" style="left:1294px;top:386px;font-size:12px;letter-spacing:0px;color:#4a4a4a;font-weight:normal;transform:scaleX(0.91);transform-origin:0 0;">Пункт Б</div>
<div class="t" style="left:1579px;top:386px;font-size:12px;letter-spacing:0px;color:#4a4a4a;font-weight:normal;transform:scaleX(0.91);transform-origin:0 0;">Направ</div>
<div class="t" style="left:1579px;top:399px;font-size:12px;letter-spacing:0px;color:#4a4a4a;font-weight:normal;transform:scaleX(0.91);transform-origin:0 0;">ление</div>
<div class="t" style="left:1729px;top:386px;font-size:12px;letter-spacing:0px;color:#4a4a4a;font-weight:normal;transform:scaleX(0.91);transform-origin:0 0;">Вид</div>
<div class="t" style="left:1729px;top:399px;font-size:12px;letter-spacing:0px;color:#4a4a4a;font-weight:normal;transform:scaleX(0.91);transform-origin:0 0;">движ-я</div>
<div class="t" style="left:1835px;top:386px;font-size:12px;letter-spacing:0px;color:#4a4a4a;font-weight:normal;transform:scaleX(0.91);transform-origin:0 0;">Тип</div>
<div class="a" style="left:286px;top:421px;width:1594px;height:16px;background:#fdf2c8"></div>
<div class="a" style="left:286px;top:421px;width:32px;height:16px;background:#f6dca0"></div>
<div class="a" style="left:318px;top:421px;width:1px;height:16px;background:#fffaf0"></div>
<div class="a" style="left:663px;top:421px;width:1px;height:16px;background:#fffaf0"></div>
<div class="a" style="left:712px;top:421px;width:1px;height:16px;background:#fffaf0"></div>
<div class="a" style="left:747px;top:421px;width:1px;height:16px;background:#fffaf0"></div>
<div class="a" style="left:928px;top:421px;width:1px;height:16px;background:#fffaf0"></div>
<div class="a" style="left:1004px;top:421px;width:1px;height:16px;background:#fffaf0"></div>
<div class="a" style="left:1289px;top:421px;width:1px;height:16px;background:#fffaf0"></div>
<div class="a" style="left:1574px;top:421px;width:1px;height:16px;background:#fffaf0"></div>
<div class="a" style="left:1724px;top:421px;width:1px;height:16px;background:#fffaf0"></div>
<div class="a" style="left:1830px;top:421px;width:1px;height:16px;background:#fffaf0"></div>
<div class="a" style="left:286px;top:438px;width:1594px;height:1px;background:#dcdcdc"></div>
<div class="t" style="right:1599px;top:422px;font-size:12px;letter-spacing:0px;color:#1a1a1a;font-weight:normal;transform:scaleX(0.91);transform-origin:100% 0;">1</div>
<div class="t" style="left:323px;top:422px;font-size:12px;letter-spacing:0px;color:#1a1a1a;font-weight:normal;transform:scaleX(0.91);transform-origin:0 0;">Козельск АС - Обнинск АС</div>
<div class="t" style="left:668px;top:422px;font-size:12px;letter-spacing:0px;color:#1a1a1a;font-weight:normal;transform:scaleX(0.91);transform-origin:0 0;">12:00</div>
<div class="t" style="left:933px;top:422px;font-size:12px;letter-spacing:0px;color:#1a1a1a;font-weight:normal;transform:scaleX(0.91);transform-origin:0 0;">АБ</div>
<div class="t" style="left:1009px;top:422px;font-size:12px;letter-spacing:0px;color:#1a1a1a;font-weight:normal;transform:scaleX(0.91);transform-origin:0 0;">Козельск АС</div>
<div class="t" style="left:1294px;top:422px;font-size:12px;letter-spacing:0px;color:#1a1a1a;font-weight:normal;transform:scaleX(0.91);transform-origin:0 0;">Обнинск АС</div>
<div class="t" style="left:1579px;top:422px;font-size:12px;letter-spacing:0px;color:#1a1a1a;font-weight:normal;transform:scaleX(0.91);transform-origin:0 0;">Прямой</div>
<div class="t" style="left:1728px;top:422px;font-size:12px;letter-spacing:0px;color:#1a1a1a;font-weight:normal;transform:scaleX(0.91);transform-origin:0 0;">маршрут</div>
<div class="a" style="left:277px;top:588px;width:1604px;height:1px;background-image:linear-gradient(90deg,#c8c8c8 50%,transparent 50%);background-size:6px 1px"></div>
<div class="t" style="left:277px;top:591px;font-size:13px;letter-spacing:-0.3px;color:#139a5e;font-weight:normal;">Пункты</div>
<div class="a" style="left:277px;top:611px;width:2px;height:360px;background:#1f9a4a"></div>
<div class="t" style="left:285px;top:613px;font-size:12px;letter-spacing:0px;color:#333;font-weight:normal;transform:scaleX(0.91);transform-origin:0 0;">Пункты из:</div>
<div class="inp" style="left:345px;top:611px;width:126px;height:20px"></div>
<div class="a" style="left:449px;top:612px;width:1px;height:18px;background:#b8b8b8"></div>
<svg class="a" style="left:456px;top:619px;" width="8" height="5" viewBox="0 0 8 5"><path d="M0 0 H7 L3.5 4Z" fill="#444"/></svg>
<div class="t" style="left:348px;top:613px;font-size:12px;letter-spacing:0px;color:#1a1a1a;font-weight:normal;transform:scaleX(0.91);transform-origin:0 0;">Адреса</div>
<div class="t" style="left:479px;top:613px;font-size:12px;letter-spacing:0px;color:#333;font-weight:normal;transform:scaleX(0.91);transform-origin:0 0;">Время по:</div>
<div class="inp" style="left:534px;top:611px;width:174px;height:20px"></div>
<div class="a" style="left:686px;top:612px;width:1px;height:18px;background:#b8b8b8"></div>
<svg class="a" style="left:693px;top:619px;" width="8" height="5" viewBox="0 0 8 5"><path d="M0 0 H7 L3.5 4Z" fill="#444"/></svg>
<div class="t" style="left:537px;top:613px;font-size:12px;letter-spacing:0px;color:#1a1a1a;font-weight:normal;transform:scaleX(0.91);transform-origin:0 0;">По прибытию и убытию</div>
<div class="t" style="left:716px;top:613.5px;font-size:12px;letter-spacing:0px;color:#333;font-weight:normal;transform:scaleX(0.91);transform-origin:0 0;">Только КП:</div>
<div class="a" style="left:779px;top:615px;width:13px;height:13px;border:1px solid #808080;border-radius:2px;background:#fff"></div>
<div class="t" style="left:801px;top:613.5px;font-size:12px;letter-spacing:0px;color:#333;font-weight:normal;transform:scaleX(0.91);transform-origin:0 0;">Только акт.:</div>
<div class="a" style="left:869px;top:615px;width:13px;height:13px;border:1px solid #808080;border-radius:2px;background:#fff"></div>
<div class="t" style="left:890px;top:613px;font-size:12px;letter-spacing:0px;color:#333;font-weight:normal;transform:scaleX(0.91);transform-origin:0 0;">Способ заполнения времени:</div>
<div class="inp" style="left:1045px;top:611px;width:310px;height:20px"></div>
<div class="a" style="left:1333px;top:612px;width:1px;height:18px;background:#b8b8b8"></div>
<svg class="a" style="left:1340px;top:619px;" width="8" height="5" viewBox="0 0 8 5"><path d="M0 0 H7 L3.5 4Z" fill="#444"/></svg>
<div class="t" style="left:1048px;top:613px;font-size:12px;letter-spacing:0px;color:#1a1a1a;font-weight:normal;transform:scaleX(0.91);transform-origin:0 0;">По спецификации путей</div>
<div class="btn" style="left:285px;top:637px;width:113px;height:21px;"></div>
<div class="t" style="left:285px;width:113px;text-align:center;top:639.5px;font-size:12px;color:#333;transform:scaleX(0.91);transform-origin:50% 0">Заполнить пункты</div>
<div class="btn" style="left:404px;top:637px;width:109px;height:21px;"></div>
<div class="t" style="left:404px;width:109px;text-align:center;top:639.5px;font-size:12px;color:#333;transform:scaleX(0.91);transform-origin:50% 0">Заполнить время</div>
<div class="btn" style="left:519px;top:637px;width:26px;height:21px;"></div>
<svg class="a" style="left:525px;top:640px;" width="14" height="16" viewBox="0 0 14 16"><path d="M11.6 6.2 Q11.3 10.2 6.3 14.9 Q7.8 11.8 8.2 9.6Z" fill="#d80000"/><circle cx="7.35" cy="5.5" r="3.15" fill="none" stroke="#ee0000" stroke-width="2.7"/></svg>
<div class="btn" style="left:1834px;top:637px;width:47px;height:21px;"></div>
<div class="t" style="left:1845px;top:639.5px;font-size:12px;letter-spacing:0px;color:#333;font-weight:normal;transform:scaleX(0.91);transform-origin:0 0;">Еще</div>
<svg class="a" style="left:1871px;top:647px;" width="6" height="4" viewBox="0 0 6 4"><path d="M0 0 H6 L3 3.5Z" fill="#444"/></svg>
<div class="a" style="left:285px;top:662px;width:1596px;height:320px;background:#fff;border:1px solid #a9a9a9"></div>
<div class="a" style="left:285px;top:662px;width:1596px;height:36px;background:#fff;border:1px solid #a9a9a9;border-bottom:none"></div>
<div class="a" style="left:287px;top:664px;width:1592px;height:33px;background:#f1f1f1"></div>
<div class="a" style="left:285px;top:698px;width:1596px;height:1px;background:#b8b8b8"></div>
<div class="a" style="left:308px;top:663px;width:1px;height:35px;background:#cdcdcd"></div>
<div class="a" style="left:309px;top:663px;width:1px;height:35px;background:#ffffff"></div>
<div class="a" style="left:774px;top:663px;width:1px;height:35px;background:#cdcdcd"></div>
<div class="a" style="left:775px;top:663px;width:1px;height:35px;background:#ffffff"></div>
<div class="a" style="left:816px;top:663px;width:1px;height:35px;background:#cdcdcd"></div>
<div class="a" style="left:817px;top:663px;width:1px;height:35px;background:#ffffff"></div>
<div class="a" style="left:858px;top:663px;width:1px;height:35px;background:#cdcdcd"></div>
<div class="a" style="left:859px;top:663px;width:1px;height:35px;background:#ffffff"></div>
<div class="a" style="left:892px;top:663px;width:1px;height:35px;background:#cdcdcd"></div>
<div class="a" style="left:893px;top:663px;width:1px;height:35px;background:#ffffff"></div>
<div class="a" style="left:939px;top:663px;width:1px;height:35px;background:#cdcdcd"></div>
<div class="a" style="left:940px;top:663px;width:1px;height:35px;background:#ffffff"></div>
<div class="a" style="left:994px;top:663px;width:1px;height:35px;background:#cdcdcd"></div>
<div class="a" style="left:995px;top:663px;width:1px;height:35px;background:#ffffff"></div>
<div class="a" style="left:1040px;top:663px;width:1px;height:35px;background:#cdcdcd"></div>
<div class="a" style="left:1041px;top:663px;width:1px;height:35px;background:#ffffff"></div>
<div class="a" style="left:1089px;top:663px;width:1px;height:35px;background:#cdcdcd"></div>
<div class="a" style="left:1090px;top:663px;width:1px;height:35px;background:#ffffff"></div>
<div class="a" style="left:1113px;top:663px;width:1px;height:35px;background:#cdcdcd"></div>
<div class="a" style="left:1114px;top:663px;width:1px;height:35px;background:#ffffff"></div>
<div class="a" style="left:1138px;top:663px;width:1px;height:35px;background:#cdcdcd"></div>
<div class="a" style="left:1139px;top:663px;width:1px;height:35px;background:#ffffff"></div>
<div class="a" style="left:1195px;top:663px;width:1px;height:35px;background:#cdcdcd"></div>
<div class="a" style="left:1196px;top:663px;width:1px;height:35px;background:#ffffff"></div>
<div class="a" style="left:1724px;top:663px;width:1px;height:35px;background:#cdcdcd"></div>
<div class="a" style="left:1725px;top:663px;width:1px;height:35px;background:#ffffff"></div>
<div class="a" style="left:1757px;top:663px;width:1px;height:35px;background:#cdcdcd"></div>
<div class="a" style="left:1758px;top:663px;width:1px;height:35px;background:#ffffff"></div>
<div class="a" style="left:1790px;top:663px;width:1px;height:35px;background:#cdcdcd"></div>
<div class="a" style="left:1791px;top:663px;width:1px;height:35px;background:#ffffff"></div>
<div class="a" style="left:1830px;top:663px;width:1px;height:35px;background:#cdcdcd"></div>
<div class="a" style="left:1831px;top:663px;width:1px;height:35px;background:#ffffff"></div>
<div class="t" style="left:290px;top:664.7px;font-size:12px;letter-spacing:0px;color:#4a4a4a;font-weight:normal;transform:scaleX(0.91);transform-origin:0 0;">Ак</div>
<div class="t" style="left:314px;top:664.7px;font-size:12px;letter-spacing:0px;color:#4a4a4a;font-weight:normal;transform:scaleX(0.91);transform-origin:0 0;">Пункт</div>
<div class="t" style="left:779px;top:664.7px;font-size:12px;letter-spacing:0px;color:#4a4a4a;font-weight:normal;transform:scaleX(0.91);transform-origin:0 0;">Время</div>
<div class="t" style="left:779px;top:677.7px;font-size:12px;letter-spacing:0px;color:#4a4a4a;font-weight:normal;transform:scaleX(0.91);transform-origin:0 0;">приб-я</div>
<div class="t" style="left:820px;top:664.7px;font-size:12px;letter-spacing:0px;color:#4a4a4a;font-weight:normal;transform:scaleX(0.91);transform-origin:0 0;">Время</div>
<div class="t" style="left:820px;top:677.7px;font-size:12px;letter-spacing:0px;color:#4a4a4a;font-weight:normal;transform:scaleX(0.91);transform-origin:0 0;">уб-ия</div>
<div class="t" style="left:863px;top:664.7px;font-size:12px;letter-spacing:0px;color:#4a4a4a;font-weight:normal;transform:scaleX(0.91);transform-origin:0 0;">Р. дн</div>
<div class="t" style="left:897px;top:664.7px;font-size:12px;letter-spacing:0px;color:#4a4a4a;font-weight:normal;transform:scaleX(0.91);transform-origin:0 0;">Движ-е</div>
<div class="t" style="left:897px;top:677.7px;font-size:12px;letter-spacing:0px;color:#4a4a4a;font-weight:normal;transform:scaleX(0.91);transform-origin:0 0;">(мин)</div>
<div class="t" style="left:943px;top:664.7px;font-size:12px;letter-spacing:0px;color:#4a4a4a;font-weight:normal;transform:scaleX(0.91);transform-origin:0 0;">Останов-</div>
<div class="t" style="left:943px;top:677.7px;font-size:12px;letter-spacing:0px;color:#4a4a4a;font-weight:normal;transform:scaleX(0.91);transform-origin:0 0;">ка (мин)</div>
<div class="t" style="left:999px;top:664.7px;font-size:12px;letter-spacing:0px;color:#4a4a4a;font-weight:normal;transform:scaleX(0.91);transform-origin:0 0;">Пробег</div>
<div class="t" style="left:999px;top:677.7px;font-size:12px;letter-spacing:0px;color:#4a4a4a;font-weight:normal;transform:scaleX(0.91);transform-origin:0 0;">(км)</div>
<div class="t" style="left:1044px;top:664.7px;font-size:12px;letter-spacing:0px;color:#4a4a4a;font-weight:normal;transform:scaleX(0.91);transform-origin:0 0;">Пробег</div>
<div class="t" style="left:1044px;top:677.7px;font-size:12px;letter-spacing:0px;color:#4a4a4a;font-weight:normal;transform:scaleX(0.91);transform-origin:0 0;">от нач.</div>
<div class="t" style="left:1094px;top:664.7px;font-size:12px;letter-spacing:0px;color:#4a4a4a;font-weight:normal;transform:scaleX(0.91);transform-origin:0 0;">КО</div>
<div class="t" style="left:1118px;top:664.7px;font-size:12px;letter-spacing:0px;color:#4a4a4a;font-weight:normal;transform:scaleX(0.91);transform-origin:0 0;">ПЛ</div>
<div class="t" style="left:1142px;top:664.7px;font-size:12px;letter-spacing:0px;color:#4a4a4a;font-weight:normal;transform:scaleX(0.91);transform-origin:0 0;">Дельта</div>
<div class="t" style="left:1142px;top:677.7px;font-size:12px;letter-spacing:0px;color:#4a4a4a;font-weight:normal;transform:scaleX(0.91);transform-origin:0 0;">от старта</div>
<div class="t" style="left:1200px;top:664.7px;font-size:12px;letter-spacing:0px;color:#4a4a4a;font-weight:normal;transform:scaleX(0.91);transform-origin:0 0;">Движение</div>
<div class="t" style="left:1729px;top:664.7px;font-size:12px;letter-spacing:0px;color:#4a4a4a;font-weight:normal;transform:scaleX(0.91);transform-origin:0 0;">Ном</div>
<div class="t" style="left:1729px;top:677.7px;font-size:12px;letter-spacing:0px;color:#4a4a4a;font-weight:normal;transform:scaleX(0.91);transform-origin:0 0;">кр</div>
<div class="t" style="left:1762px;top:664.7px;font-size:12px;letter-spacing:0px;color:#4a4a4a;font-weight:normal;transform:scaleX(0.91);transform-origin:0 0;">Ном</div>
<div class="t" style="left:1762px;top:677.7px;font-size:12px;letter-spacing:0px;color:#4a4a4a;font-weight:normal;transform:scaleX(0.91);transform-origin:0 0;">п кр</div>
<div class="t" style="left:1795px;top:664.7px;font-size:12px;letter-spacing:0px;color:#4a4a4a;font-weight:normal;transform:scaleX(0.91);transform-origin:0 0;">Ном</div>
<div class="t" style="left:1795px;top:677.7px;font-size:12px;letter-spacing:0px;color:#4a4a4a;font-weight:normal;transform:scaleX(0.91);transform-origin:0 0;">кр ПУ</div>
<div class="t" style="left:1834px;top:664.7px;font-size:12px;letter-spacing:0px;color:#4a4a4a;font-weight:normal;transform:scaleX(0.91);transform-origin:0 0;">Ном</div>
<div class="t" style="left:1834px;top:677.7px;font-size:12px;letter-spacing:0px;color:#4a4a4a;font-weight:normal;transform:scaleX(0.91);transform-origin:0 0;">п кр ПУ</div>
<div class="a" style="left:1090px;top:699px;width:23px;height:18px;background:#e3e3e3"></div>
<div class="a" style="left:286px;top:717px;width:1594px;height:1px;background:#e2e2e2"></div>
<div class="a" style="left:291px;top:701px;width:13px;height:13px;border:1px solid #7d7d7d;border-radius:2px;background:#fff"></div>
<svg class="a" style="left:293px;top:699px;" width="13" height="13" viewBox="0 0 13 13"><path d="M2 6.5 L5 10 L11.5 1.5" fill="none" stroke="#1e9e4a" stroke-width="2"/></svg>
<div class="t" style="left:314px;top:700.5px;font-size:12px;letter-spacing:0.1px;color:#1a1a1a;font-weight:bold;">Козельск АС</div>
<div class="t" style="left:779px;top:700.5px;font-size:12px;letter-spacing:0px;color:#1a1a1a;font-weight:normal;transform:scaleX(0.91);transform-origin:0 0;">12:00</div>
<div class="t" style="left:820px;top:700.5px;font-size:12px;letter-spacing:0px;color:#1a1a1a;font-weight:normal;transform:scaleX(0.91);transform-origin:0 0;">12:00</div>
<svg class="a" style="left:1096px;top:700px;" width="15" height="12" viewBox="0 0 15 12"><path d="M1.5 6 L5.5 10 L13.5 1.5" fill="none" stroke="#1e9e4a" stroke-width="2.2"/></svg>
<div class="a" style="left:1119px;top:701px;width:13px;height:13px;border:1px solid #7d7d7d;border-radius:2px;background:#fff"></div>
<div class="t" style="left:1199px;top:700.5px;font-size:12px;letter-spacing:0px;color:#1a1a1a;font-weight:normal;transform:scaleX(0.91);transform-origin:0 0;">маршрут</div>
<div class="t" style="right:160px;top:700.5px;font-size:12px;letter-spacing:0px;color:#1a1a1a;font-weight:normal;transform:scaleX(0.91);transform-origin:100% 0;">1</div>
<div class="t" style="right:127px;top:700.5px;font-size:12px;letter-spacing:0px;color:#1a1a1a;font-weight:normal;transform:scaleX(0.91);transform-origin:100% 0;">1</div>
<div class="t" style="right:87px;top:700.5px;font-size:12px;letter-spacing:0px;color:#1a1a1a;font-weight:normal;transform:scaleX(0.91);transform-origin:100% 0;">1</div>
<div class="t" style="right:37px;top:700.5px;font-size:12px;letter-spacing:0px;color:#1a1a1a;font-weight:normal;transform:scaleX(0.91);transform-origin:100% 0;">1</div>
<div class="a" style="left:286px;top:718px;width:1594px;height:18px;background:#fdf2c6"></div>
<div class="a" style="left:308px;top:718px;width:1px;height:18px;background:#fff"></div>
<div class="a" style="left:774px;top:718px;width:1px;height:18px;background:#fff"></div>
<div class="a" style="left:816px;top:718px;width:1px;height:18px;background:#fff"></div>
<div class="a" style="left:858px;top:718px;width:1px;height:18px;background:#fff"></div>
<div class="a" style="left:892px;top:718px;width:1px;height:18px;background:#fff"></div>
<div class="a" style="left:939px;top:718px;width:1px;height:18px;background:#fff"></div>
<div class="a" style="left:994px;top:718px;width:1px;height:18px;background:#fff"></div>
<div class="a" style="left:1040px;top:718px;width:1px;height:18px;background:#fff"></div>
<div class="a" style="left:1089px;top:718px;width:1px;height:18px;background:#fff"></div>
<div class="a" style="left:1113px;top:718px;width:1px;height:18px;background:#fff"></div>
<div class="a" style="left:1138px;top:718px;width:1px;height:18px;background:#fff"></div>
<div class="a" style="left:1195px;top:718px;width:1px;height:18px;background:#fff"></div>
<div class="a" style="left:1724px;top:718px;width:1px;height:18px;background:#fff"></div>
<div class="a" style="left:1757px;top:718px;width:1px;height:18px;background:#fff"></div>
<div class="a" style="left:1790px;top:718px;width:1px;height:18px;background:#fff"></div>
<div class="a" style="left:1830px;top:718px;width:1px;height:18px;background:#fff"></div>
<div class="a" style="left:310px;top:718px;width:464px;height:18px;background:#fbe28f;border:2px solid #f2bf2f"></div>
<div class="a" style="left:1090px;top:718px;width:23px;height:18px;background:#f7f7f7"></div>
<div class="a" style="left:286px;top:736px;width:1594px;height:1px;background:#e2e2e2"></div>
<div class="a" style="left:291px;top:720px;width:13px;height:13px;border:1px solid #7d7d7d;border-radius:2px;background:#fff"></div>
<svg class="a" style="left:293px;top:718px;" width="13" height="13" viewBox="0 0 13 13"><path d="M2 6.5 L5 10 L11.5 1.5" fill="none" stroke="#1e9e4a" stroke-width="2"/></svg>
<div class="t" style="left:314px;top:719.5px;font-size:12px;letter-spacing:0px;color:#1a1a1a;font-weight:normal;transform:scaleX(0.91);transform-origin:0 0;">Перемышль</div>
<div class="t" style="right:877px;top:719.5px;font-size:12px;letter-spacing:0px;color:#1a1a1a;font-weight:normal;transform:scaleX(0.91);transform-origin:100% 0;">41,0</div>
<div class="t" style="right:828px;top:719.5px;font-size:12px;letter-spacing:0px;color:#1a1a1a;font-weight:normal;transform:scaleX(0.91);transform-origin:100% 0;">41,0</div>
<div class="a" style="left:1119px;top:720px;width:13px;height:13px;border:1px solid #7d7d7d;border-radius:2px;background:#fff"></div>
<div class="t" style="right:722px;top:719.5px;font-size:12px;letter-spacing:0px;color:#1a1a1a;font-weight:normal;transform:scaleX(0.91);transform-origin:100% 0;">60</div>
<div class="t" style="left:1199px;top:719.5px;font-size:12px;letter-spacing:0px;color:#1a1a1a;font-weight:normal;transform:scaleX(0.91);transform-origin:0 0;">маршрут</div>
<div class="t" style="right:160px;top:719.5px;font-size:12px;letter-spacing:0px;color:#1a1a1a;font-weight:normal;transform:scaleX(0.91);transform-origin:100% 0;">1</div>
<div class="t" style="right:127px;top:719.5px;font-size:12px;letter-spacing:0px;color:#1a1a1a;font-weight:normal;transform:scaleX(0.91);transform-origin:100% 0;">1</div>
<div class="t" style="right:87px;top:719.5px;font-size:12px;letter-spacing:0px;color:#1a1a1a;font-weight:normal;transform:scaleX(0.91);transform-origin:100% 0;">1</div>
<div class="t" style="right:37px;top:719.5px;font-size:12px;letter-spacing:0px;color:#1a1a1a;font-weight:normal;transform:scaleX(0.91);transform-origin:100% 0;">1</div>
<div class="a" style="left:1090px;top:737px;width:23px;height:18px;background:#e3e3e3"></div>
<div class="a" style="left:286px;top:755px;width:1594px;height:1px;background:#e2e2e2"></div>
<div class="a" style="left:291px;top:739px;width:13px;height:13px;border:1px solid #7d7d7d;border-radius:2px;background:#fff"></div>
<svg class="a" style="left:293px;top:737px;" width="13" height="13" viewBox="0 0 13 13"><path d="M2 6.5 L5 10 L11.5 1.5" fill="none" stroke="#1e9e4a" stroke-width="2"/></svg>
<div class="t" style="left:314px;top:738.5px;font-size:12px;letter-spacing:0px;color:#1a1a1a;font-weight:normal;transform:scaleX(0.91);transform-origin:0 0;">Калуга АВ</div>
<div class="t" style="right:877px;top:738.5px;font-size:12px;letter-spacing:0px;color:#1a1a1a;font-weight:normal;transform:scaleX(0.91);transform-origin:100% 0;">51,0</div>
<div class="t" style="right:828px;top:738.5px;font-size:12px;letter-spacing:0px;color:#1a1a1a;font-weight:normal;transform:scaleX(0.91);transform-origin:100% 0;">92,0</div>
<div class="a" style="left:1119px;top:739px;width:13px;height:13px;border:1px solid #7d7d7d;border-radius:2px;background:#fff"></div>
<div class="t" style="right:722px;top:738.5px;font-size:12px;letter-spacing:0px;color:#1a1a1a;font-weight:normal;transform:scaleX(0.91);transform-origin:100% 0;">130</div>
<div class="t" style="left:1199px;top:738.5px;font-size:12px;letter-spacing:0px;color:#1a1a1a;font-weight:normal;transform:scaleX(0.91);transform-origin:0 0;">маршрут</div>
<div class="t" style="right:160px;top:738.5px;font-size:12px;letter-spacing:0px;color:#1a1a1a;font-weight:normal;transform:scaleX(0.91);transform-origin:100% 0;">1</div>
<div class="t" style="right:127px;top:738.5px;font-size:12px;letter-spacing:0px;color:#1a1a1a;font-weight:normal;transform:scaleX(0.91);transform-origin:100% 0;">1</div>
<div class="t" style="right:87px;top:738.5px;font-size:12px;letter-spacing:0px;color:#1a1a1a;font-weight:normal;transform:scaleX(0.91);transform-origin:100% 0;">1</div>
<div class="t" style="right:37px;top:738.5px;font-size:12px;letter-spacing:0px;color:#1a1a1a;font-weight:normal;transform:scaleX(0.91);transform-origin:100% 0;">1</div>
<div class="a" style="left:1090px;top:756px;width:23px;height:18px;background:#e3e3e3"></div>
<div class="a" style="left:286px;top:774px;width:1594px;height:1px;background:#e2e2e2"></div>
<div class="a" style="left:291px;top:758px;width:13px;height:13px;border:1px solid #7d7d7d;border-radius:2px;background:#fff"></div>
<svg class="a" style="left:293px;top:756px;" width="13" height="13" viewBox="0 0 13 13"><path d="M2 6.5 L5 10 L11.5 1.5" fill="none" stroke="#1e9e4a" stroke-width="2"/></svg>
<div class="t" style="left:314px;top:757.5px;font-size:12px;letter-spacing:0.1px;color:#1a1a1a;font-weight:bold;">Обнинск АС</div>
<div class="t" style="right:877px;top:757.5px;font-size:12px;letter-spacing:0px;color:#1a1a1a;font-weight:normal;transform:scaleX(0.91);transform-origin:100% 0;">68,0</div>
<div class="t" style="right:828px;top:757.5px;font-size:12px;letter-spacing:0px;color:#1a1a1a;font-weight:normal;transform:scaleX(0.91);transform-origin:100% 0;">160,0</div>
<svg class="a" style="left:1096px;top:757px;" width="15" height="12" viewBox="0 0 15 12"><path d="M1.5 6 L5.5 10 L13.5 1.5" fill="none" stroke="#1e9e4a" stroke-width="2.2"/></svg>
<div class="a" style="left:1119px;top:758px;width:13px;height:13px;border:1px solid #7d7d7d;border-radius:2px;background:#fff"></div>
<div class="t" style="right:722px;top:757.5px;font-size:12px;letter-spacing:0px;color:#1a1a1a;font-weight:normal;transform:scaleX(0.91);transform-origin:100% 0;">210</div>
<div class="t" style="left:1199px;top:757.5px;font-size:12px;letter-spacing:0px;color:#1a1a1a;font-weight:normal;transform:scaleX(0.91);transform-origin:0 0;">маршрут</div>
<div class="t" style="right:160px;top:757.5px;font-size:12px;letter-spacing:0px;color:#1a1a1a;font-weight:normal;transform:scaleX(0.91);transform-origin:100% 0;">1</div>
<div class="t" style="right:127px;top:757.5px;font-size:12px;letter-spacing:0px;color:#1a1a1a;font-weight:normal;transform:scaleX(0.91);transform-origin:100% 0;">1</div>
<div class="t" style="right:87px;top:757.5px;font-size:12px;letter-spacing:0px;color:#1a1a1a;font-weight:normal;transform:scaleX(0.91);transform-origin:100% 0;">1</div>
<div class="t" style="right:37px;top:757.5px;font-size:12px;letter-spacing:0px;color:#1a1a1a;font-weight:normal;transform:scaleX(0.91);transform-origin:100% 0;">2</div>
<div class="a" style="left:280px;top:415px;width:1552px;height:29px;background:#fecd98;mix-blend-mode:multiply;box-shadow:2px 2px 4px rgba(50,60,80,.28)"></div>
<div class="a" style="left:923px;top:209px;width:114px;height:38px;background:#80ff80;mix-blend-mode:multiply;box-shadow:2px 2px 3px rgba(0,0,0,.25)"></div>
<div class="a" style="left:741px;top:723px;width:274px;height:193px;background:#fff;border:1px solid #9a9a9a;box-shadow:3px 3px 3px rgba(0,0,0,.3)"></div>
<div class="a" style="left:743px;top:725px;width:270px;height:25px;background:#f6c81d"></div>
<div class="t" style="left:776px;top:729.5px;font-size:12px;letter-spacing:0px;color:#111;font-weight:normal;transform:scaleX(0.91);transform-origin:0 0;">Добавить</div>
<div class="t" style="right:925px;top:729.5px;font-size:12px;letter-spacing:0px;color:#7a6a40;font-weight:normal;transform:scaleX(0.87);transform-origin:100% 0;">Ins</div>
<div class="t" style="left:776px;top:756px;font-size:12px;letter-spacing:0px;color:#333;font-weight:normal;transform:scaleX(0.91);transform-origin:0 0;">Скопировать</div>
<div class="t" style="right:925px;top:756px;font-size:12px;letter-spacing:0px;color:#8a8a8a;font-weight:normal;transform:scaleX(0.87);transform-origin:100% 0;">F9</div>
<div class="t" style="left:776px;top:782px;font-size:12px;letter-spacing:0px;color:#333;font-weight:normal;transform:scaleX(0.91);transform-origin:0 0;">Удалить</div>
<div class="t" style="right:925px;top:782px;font-size:12px;letter-spacing:0px;color:#8a8a8a;font-weight:normal;transform:scaleX(0.87);transform-origin:100% 0;">Del</div>
<div class="t" style="left:776px;top:812px;font-size:12px;letter-spacing:0px;color:#333;font-weight:normal;transform:scaleX(0.91);transform-origin:0 0;">Переместить вверх</div>
<div class="t" style="right:925px;top:812px;font-size:12px;letter-spacing:0px;color:#8a8a8a;font-weight:normal;transform:scaleX(0.87);transform-origin:100% 0;">Ctrl+Shift+Up</div>
<div class="t" style="left:776px;top:838px;font-size:12px;letter-spacing:0px;color:#333;font-weight:normal;transform:scaleX(0.91);transform-origin:0 0;">Переместить вниз</div>
<div class="t" style="right:925px;top:838px;font-size:12px;letter-spacing:0px;color:#8a8a8a;font-weight:normal;transform:scaleX(0.87);transform-origin:100% 0;">Ctrl+Shift+Down</div>
<div class="t" style="left:776px;top:868px;font-size:12px;letter-spacing:0px;color:#333;font-weight:normal;transform:scaleX(0.91);transform-origin:0 0;">Копировать</div>
<div class="t" style="right:925px;top:868px;font-size:12px;letter-spacing:0px;color:#8a8a8a;font-weight:normal;transform:scaleX(0.87);transform-origin:100% 0;">Ctrl+C</div>
<div class="t" style="left:776px;top:894px;font-size:12px;letter-spacing:0px;color:#333;font-weight:normal;transform:scaleX(0.91);transform-origin:0 0;">Выделить все</div>
<div class="t" style="right:925px;top:894px;font-size:12px;letter-spacing:0px;color:#8a8a8a;font-weight:normal;transform:scaleX(0.87);transform-origin:100% 0;">Ctrl+A</div>
<div class="a" style="left:743px;top:804px;width:270px;height:1px;background:#e2ddcc"></div>
<div class="a" style="left:743px;top:860px;width:270px;height:1px;background:#e2ddcc"></div>
<svg class="a" style="left:753px;top:729px;" width="16" height="16" viewBox="0 0 16 16"><circle cx="8" cy="8" r="7" fill="#34a853" stroke="#1f8a3c" stroke-width="0.9"/><path d="M8 4.2 V11.8 M4.2 8 H11.8" stroke="#fff" stroke-width="2"/></svg>
<svg class="a" style="left:752px;top:755px;" width="17" height="17" viewBox="0 0 17 17"><path d="M3.5 1.5 H10.5 L14.5 5.5 V14.5 H3.5Z" fill="#f6f7f9" stroke="#6a7a90" stroke-width="0.9"/><path d="M10.5 1.5 V5.5 H14.5" fill="none" stroke="#6a7a90" stroke-width="0.8"/><circle cx="6.4" cy="11.6" r="4.4" fill="#34a853" stroke="#1f8a3c" stroke-width="0.6"/><path d="M6.4 9.2 V14 M4 11.6 H8.8" stroke="#fff" stroke-width="1.4"/></svg>
<svg class="a" style="left:753px;top:781px;" width="16" height="16" viewBox="0 0 16 16"><circle cx="8" cy="8" r="7" fill="#d92a2e" stroke="#b01c20" stroke-width="0.8"/><path d="M5.3 5.3 L10.7 10.7 M10.7 5.3 L5.3 10.7" stroke="#fff" stroke-width="1.7"/></svg>
<svg class="a" style="left:753px;top:812px;" width="15" height="15" viewBox="0 0 15 15"><path d="M7.5 1.3 L13 7 H9.6 V12.6 H5.4 V7 H2Z" fill="#4aa8e2" stroke="#2f7fc0" stroke-width="0.6"/></svg>
<svg class="a" style="left:753px;top:838px;" width="15" height="15" viewBox="0 0 15 15"><path d="M7.5 13.7 L13 8 H9.6 V2.4 H5.4 V8 H2Z" fill="#4aa8e2" stroke="#2f7fc0" stroke-width="0.6"/></svg>
<svg class="a" style="left:752px;top:866px;" width="17" height="17" viewBox="0 0 17 17"><path d="M1.6 1.6 H7.2 L9.4 3.8 V11 H1.6Z" fill="#fff" stroke="#6a7a90" stroke-width="0.9"/><path d="M3 4.3 H6.5 M3 6.3 H8 M3 8.3 H8" stroke="#8a98aa" stroke-width="0.7"/><path d="M7.6 5.6 H13.3 L15.6 7.9 V15.4 H7.6Z" fill="#fff" stroke="#6a7a90" stroke-width="0.9"/><path d="M9.2 9 H14 M9.2 11 H14 M9.2 13 H14" stroke="#8a98aa" stroke-width="0.7"/></svg>
<svg class="a" style="left:0;top:0" width="1913" height="971" viewBox="0 0 1913 971"><defs><filter id="sh" x="-20%" y="-20%" width="140%" height="160%"><feGaussianBlur in="SourceAlpha" stdDeviation="2"/><feOffset dx="1.5" dy="3"/><feComponentTransfer><feFuncA type="linear" slope="0.5"/></feComponentTransfer><feMerge><feMergeNode/><feMergeNode in="SourceGraphic"/></feMerge></filter></defs><g filter="url(#sh)"><path d="M1209 160 Q1149 197 1067 214.5" fill="none" stroke="#0000ff" stroke-width="2.3" stroke-dasharray="2.2 2.2"/><path d="M1050 217.4 L1068 208.5 L1064 214.5 L1070 220.5Z" fill="#0000ff"/><circle cx="1224.4" cy="152.4" r="10.6" fill="#fff" stroke="#d0d0d0" stroke-width="0.6"/><circle cx="1224.4" cy="152.4" r="8.4" fill="#0000f0"/><text x="1224.4" y="156.6" text-anchor="middle" font-family="Liberation Sans" font-weight="bold" font-size="12" fill="#fff">1</text><path d="M741 486.5 C660 494 600 485 523 454" fill="none" stroke="#0000ff" stroke-width="2.3" stroke-dasharray="2.2 2.2"/><path d="M506.4 446.4 L525.6 448.5 L521.5 454 L521 460Z" fill="#0000ff"/><circle cx="756.3" cy="490.6" r="10.6" fill="#fff" stroke="#d0d0d0" stroke-width="0.6"/><circle cx="756.3" cy="490.6" r="8.4" fill="#0000f0"/><text x="756.3" y="494.8" text-anchor="middle" font-family="Liberation Sans" font-weight="bold" font-size="12" fill="#fff">2</text><path d="M1160.5 654 C1110 692 1040 716 869 737.3" fill="none" stroke="#0000ff" stroke-width="2.3" stroke-dasharray="2.2 2.2"/><path d="M853 739.4 L871.7 731.2 L869.2 737.3 L872.8 742.7Z" fill="#0000ff"/><circle cx="1169.3" cy="645.4" r="10.6" fill="#fff" stroke="#d0d0d0" stroke-width="0.6"/><circle cx="1169.3" cy="645.4" r="8.4" fill="#0000f0"/><text x="1169.3" y="649.6" text-anchor="middle" font-family="Liberation Sans" font-weight="bold" font-size="12" fill="#fff">3</text><path d="M476.6 842.6 C560 818 640 808 730 816" fill="none" stroke="#0000ff" stroke-width="2.3" stroke-dasharray="2.2 2.2"/><path d="M748 818.7 L729 810.5 L732 816.5 L727 822Z" fill="#0000ff"/><path d="M476.6 846.6 C570 858 650 858 727 850.6" fill="none" stroke="#0000ff" stroke-width="2.3" stroke-dasharray="2.2 2.2"/><path d="M742.7 848.8 L724 844.5 L728.5 850.5 L725 856Z" fill="#0000ff"/><circle cx="457.4" cy="844.5" r="10.6" fill="#fff" stroke="#d0d0d0" stroke-width="0.6"/><circle cx="457.4" cy="844.5" r="8.4" fill="#0000f0"/><text x="457.4" y="848.7" text-anchor="middle" font-family="Liberation Sans" font-weight="bold" font-size="12" fill="#fff">4</text></g></svg></body></html>
